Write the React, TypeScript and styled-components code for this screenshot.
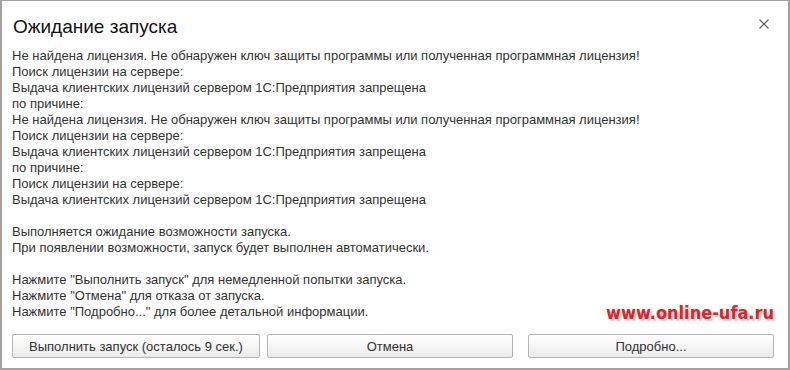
import React from 'react';
import styled, {createGlobalStyle} from 'styled-components';

const GlobalStyle = createGlobalStyle`
  html, body {
    margin: 0;
    padding: 0;
    background: #ffffff;
  }
  body {
    font-family: 'Liberation Sans', Arial, sans-serif;
  }
`;

const lines = [
  'Не найдена лицензия. Не обнаружен ключ защиты программы или полученная программная лицензия!',
  'Поиск лицензии на сервере:',
  'Выдача клиентских лицензий сервером 1С:Предприятия запрещена',
  'по причине:',
  'Не найдена лицензия. Не обнаружен ключ защиты программы или полученная программная лицензия!',
  'Поиск лицензии на сервере:',
  'Выдача клиентских лицензий сервером 1С:Предприятия запрещена',
  'по причине:',
  'Поиск лицензии на сервере:',
  'Выдача клиентских лицензий сервером 1С:Предприятия запрещена',
  '',
  'Выполняется ожидание возможности запуска.',
  'При появлении возможности, запуск будет выполнен автоматически.',
  '',
  'Нажмите "Выполнить запуск" для немедленной попытки запуска.',
  'Нажмите "Отмена" для отказа от запуска.',
  'Нажмите "Подробно..." для более детальной информации.',
];

const App = () => {
  return (
    <>
      <GlobalStyle />
      <Window>
        <Header>
          <Title>Ожидание запуска</Title>
          <CloseButton aria-label="Закрыть">
            <svg width="10" height="10" viewBox="0 0 10 10">
              <path d="M0.5 0.5 L9.5 9.5 M9.5 0.5 L0.5 9.5" stroke="#5a5a5a" strokeWidth="1.2" />
            </svg>
          </CloseButton>
        </Header>
        <Message>
          {lines.map((line, index) => (
            <Line key={index}>{line || '\u00a0'}</Line>
          ))}
        </Message>
        <ButtonRow>
          <DialogButton $width={248}>Выполнить запуск (осталось 9 сек.)</DialogButton>
          <DialogButton $width={246}>Отмена</DialogButton>
          <DialogButton $width={246} $push={8}>
            Подробно...
          </DialogButton>
        </ButtonRow>
        <Watermark>www.online-ufa.ru</Watermark>
      </Window>
    </>
  );
};

export default App;

const Window = styled.div`
  position: relative;
  width: 790px;
  height: 370px;
  box-sizing: border-box;
  border: 2px solid #a2a2a2;
  border-top-width: 1px;
  background: #ffffff;
  display: flex;
  flex-direction: column;
`;

const Header = styled.div`
  display: flex;
  justify-content: space-between;
  align-items: flex-start;
  padding: 15px 19px 0 11px;
`;

const Title = styled.div`
  font-size: 19px;
  line-height: 22px;
  color: #111111;
`;

const CloseButton = styled.div`
  width: 10px;
  height: 10px;
  margin-top: 3px;
  display: flex;
`;

const Message = styled.div`
  margin-top: 10px;
  padding: 0 10px;
  font-size: 13px;
  line-height: 16px;
  color: #333333;
`;

const Line = styled.div`
  white-space: pre;
`;

const ButtonRow = styled.div`
  display: flex;
  gap: 7px;
  margin-top: 14px;
  padding: 0 10px;
`;

const DialogButton = styled.div<{$width: number; $push?: number}>`
  width: ${(p) => p.$width}px;
  margin-left: ${(p) => p.$push ?? 0}px;
  height: 24px;
  box-sizing: border-box;
  border: 1px solid #b4b4b4;
  border-radius: 2px;
  background: linear-gradient(#ffffff, #ebebeb);
  display: flex;
  align-items: center;
  justify-content: center;
  font-size: 13px;
  color: #333333;
`;

const Watermark = styled.div`
  position: absolute;
  left: 604px;
  top: 300px;
  font-family: 'DejaVu Sans Condensed', 'DejaVu Sans', sans-serif;
  font-weight: bold;
  font-size: 18px;
  line-height: 24px;
  color: #d7262d;
  text-shadow: 2px 2px 2px rgba(120, 120, 120, 0.45);
`;
